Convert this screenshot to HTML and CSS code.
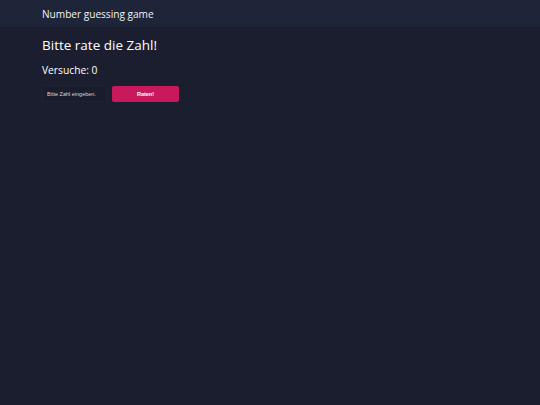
FILE: index.html
```html
<!DOCTYPE html>
<html lang="de">
<head>
<meta charset="utf-8">
<title>Number guessing game</title>
<link rel="stylesheet" href="styles.css">
</head>
<body>
<header class="topbar">
  <div class="brand">Number guessing game</div>
</header>
<main class="content">
  <h1 class="title">Bitte rate die Zahl!</h1>
  <p class="tries">Versuche: 0</p>
  <form class="guess-form">
    <input class="guess-input" type="text" placeholder="Bitte Zahl eingeben.">
    <button class="guess-btn" type="button">Raten!</button>
  </form>
</main>
</body>
</html>
```
FILE: styles.css
```css
html, body {
  margin: 0;
  padding: 0;
  height: 100%;
}
body {
  background: #1b1e2f;
  color: #ffffff;
  font-family: "Open Sans", "Noto Sans", sans-serif;
}
.topbar {
  background: #1f2538;
  height: 27px;
  display: flex;
  align-items: center;
  padding: 0 42px;
}
.brand {
  font-size: 10.1px;
  color: #f0f2f5;
}
.content {
  padding: 9px 42px;
}
.title {
  margin: 0;
  font-size: 13.5px;
  font-weight: 400;
  line-height: 18px;
}
.tries {
  margin: 9px 0 0;
  font-size: 10.25px;
  line-height: 14px;
}
.guess-form {
  display: flex;
  align-items: flex-start;
  gap: 5px;
  margin-top: 8px;
}
.guess-input {
  width: 65px;
  height: 17px;
  box-sizing: border-box;
  background: #191c2a;
  border: 1px solid #1f2335;
  color: #fff;
  font-family: "Liberation Sans", Arial, sans-serif;
  font-size: 5.5px;
  padding: 0 4px;
  outline: none;
}
.guess-input::placeholder {
  color: #d8d8dc;
}
.guess-btn {
  width: 67px;
  height: 16.5px;
  margin-top: 0.5px;
  background: #c8195d;
  border: none;
  border-radius: 2px;
  color: #fff;
  font-family: "Liberation Sans", Arial, sans-serif;
  font-weight: 700;
  font-size: 5.5px;
  padding: 0;
}
```
